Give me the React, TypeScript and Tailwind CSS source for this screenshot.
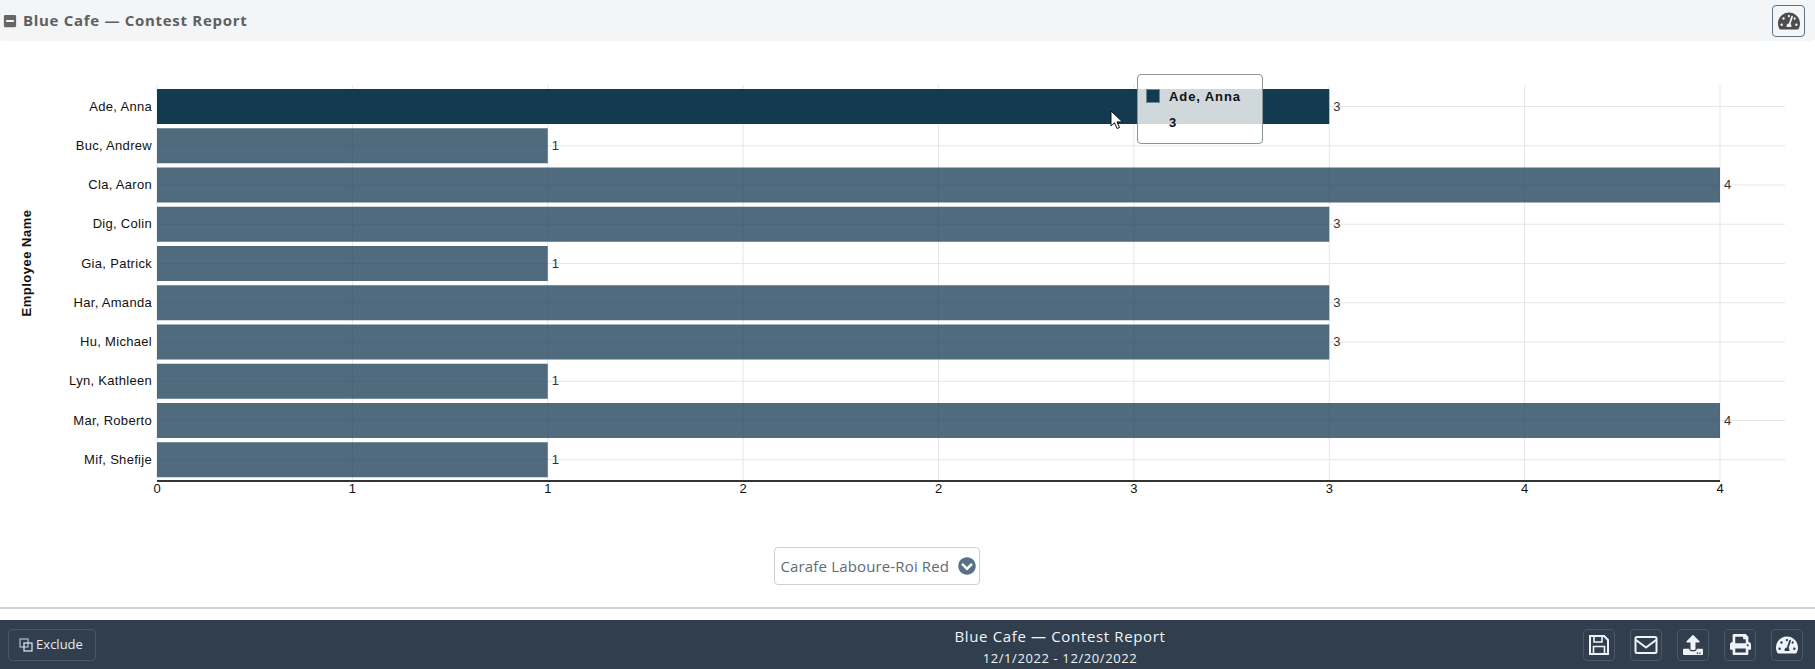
import React from 'react';
import {
  FaMinusSquare,
  FaTachometerAlt,
  FaUpload,
  FaPrint,
  FaChevronCircleDown,
} from 'react-icons/fa';

const rows = [
  { name: 'Ade, Anna', value: 3 },
  { name: 'Buc, Andrew', value: 1 },
  { name: 'Cla, Aaron', value: 4 },
  { name: 'Dig, Colin', value: 3 },
  { name: 'Gia, Patrick', value: 1 },
  { name: 'Har, Amanda', value: 3 },
  { name: 'Hu, Michael', value: 3 },
  { name: 'Lyn, Kathleen', value: 1 },
  { name: 'Mar, Roberto', value: 4 },
  { name: 'Mif, Shefije', value: 1 },
];

const ticks = ['0', '1', '1', '2', '2', '3', '3', '4', '4'];

const X0 = 157;
const UNIT = 390.75;
const TOP = 48;
const PITCH = 39.25;

const Chart: React.FC = () => (
  <svg width={1815} height={515} className="block" style={{ fontFamily: '"Liberation Sans", Arial, sans-serif' }}>
    {/* Grid */}
    {ticks.map((_, i) => (
      <line key={i} x1={X0 + (i * UNIT) / 2} x2={X0 + (i * UNIT) / 2} y1={44} y2={439} stroke="#e6e6e6" />
    ))}
    {rows.map((r, i) => (
      <line key={r.name} x1={X0} x2={1785} y1={65.5 + i * PITCH} y2={65.5 + i * PITCH} stroke="#e6e6e6" />
    ))}

    {/* Bars */}
    {rows.map((r, i) => {
      const y = TOP + i * PITCH;
      return (
        <g key={r.name}>
          <rect x={X0} y={y} width={r.value * UNIT} height={35} fill="#143a52" fillOpacity={i === 0 ? 1 : 0.75} />
          <text x={152} y={y + 21.5} textAnchor="end" fontSize={13} letterSpacing={0.3} fill="#111">
            {r.name}
          </text>
          <text x={X0 + r.value * UNIT + 4} y={y + 21.5} fontSize={13} fill="#333">
            {r.value}
          </text>
        </g>
      );
    })}

    {/* Axis */}
    <rect x={X0} y={439} width={1563} height={2} fill="#333" />
    {ticks.map((t, i) => (
      <text key={i} x={X0 + (i * UNIT) / 2} y={452} textAnchor="middle" fontSize={13} fill="#111">
        {t}
      </text>
    ))}
    <text
      transform="translate(31 222) rotate(-90)"
      textAnchor="middle"
      fontSize={13}
      fontWeight={700}
      letterSpacing={0.5}
      fill="#111"
    >
      Employee Name
    </text>
  </svg>
);

const ToolButton: React.FC<{ children: React.ReactNode }> = ({ children }) => (
  <button className="flex h-8 w-8 items-center justify-center rounded border border-[#4a5866] text-[#eef3f8]">
    {children}
  </button>
);

export default function App() {
  return (
    <div className="relative flex h-[669px] w-[1815px] flex-col overflow-hidden bg-white font-['Open_Sans',sans-serif]">
      {/* Header */}
      <div className="flex h-[41px] items-center justify-between rounded-b bg-[#f3f5f7] pl-[3px] pr-[10px]">
        <div className="flex items-center gap-[6px] text-[15px] font-bold tracking-[0.7px] text-[#5f5f5f]">
          <FaMinusSquare className="h-[14px] w-[14px] text-[#666]" />
          <span>Blue Cafe — Contest Report</span>
        </div>
        <button className="flex h-[32px] w-[33px] items-center justify-center rounded border border-[#5f7486] text-[#4d4d4d]">
          <FaTachometerAlt className="h-[22px] w-[22px]" />
        </button>
      </div>

      <Chart />

      {/* Wine picker */}
      <div className="flex justify-center pr-[62px]">
        <div className="-mt-[9px] flex h-[38px] w-[206px] items-center justify-between rounded border border-[#cfcfcf] pl-[6px] pr-[3px] text-[15px] tracking-[0.15px] text-[#5f6b76]">
          <span>Carafe Laboure-Roi Red</span>
          <FaChevronCircleDown className="h-[18px] w-[18px] text-[#5a7087]" />
        </div>
      </div>

      <div className="mt-[22px] h-[2px] bg-[#d2d2d2]" />

      {/* Footer */}
      <div className="mt-auto flex h-[49px] items-center justify-between bg-[#303e4d] pl-2 pr-3 text-white">
        <button className="flex h-8 w-[88px] items-center justify-center gap-[3px] rounded border border-[#4a5866] pr-[2px] text-[13px] text-[#e4ebf2]">
          <svg width="14" height="14" viewBox="0 0 14 14" fill="none" stroke="currentColor" strokeWidth="1.2">
            <rect x="1" y="1" width="8" height="8" stroke="#a9c3dc" />
            <rect x="5" y="5" width="8" height="8" />
          </svg>
          Exclude
        </button>
        <div className="absolute left-[1060px] top-[625px] -translate-x-[50%] text-center">
          <div className="text-[15px] leading-[22px] tracking-[0.65px] text-[#f2f5f8]">Blue Cafe — Contest Report</div>
          <div className="mt-[1px] text-[13px] leading-[20px] tracking-[0.6px] text-[#eef2f6]">12/1/2022 - 12/20/2022</div>
        </div>
        <div className="flex gap-[15px]">
          <ToolButton>
            {/* floppy disk */}
            <svg width="22" height="22" viewBox="0 0 22 22" fill="none" stroke="currentColor" strokeWidth="2">
              <path d="M2 2h14l4 4v14H2z" />
              <path d="M6 2v6h8V2" strokeWidth="1.6" />
              <path d="M5.5 20v-7.5h11V20" strokeWidth="1.6" />
            </svg>
          </ToolButton>
          <ToolButton>
            {/* envelope */}
            <svg width="24" height="20" viewBox="0 0 24 20" fill="none" stroke="currentColor" strokeWidth="2">
              <rect x="1.5" y="2" width="21" height="16" rx="1.5" />
              <path d="M2 5l10 7.5L22 5" />
            </svg>
          </ToolButton>
          <ToolButton>
            <FaUpload className="h-[20px] w-[20px]" />
          </ToolButton>
          <ToolButton>
            <FaPrint className="h-[21px] w-[21px]" />
          </ToolButton>
          <ToolButton>
            <FaTachometerAlt className="h-[22px] w-[22px]" />
          </ToolButton>
        </div>
      </div>

      {/* Chart tooltip */}
      <div className="absolute left-[1137px] top-[74px] h-[70px] w-[126px] rounded border border-[#8a959c] bg-white/80 font-['Liberation_Sans',sans-serif] text-[13px] font-bold tracking-[0.9px] text-[#111]">
        <div className="absolute left-[8px] top-[14px] h-[14px] w-[14px] border border-[#6f8594] bg-[#143a52]" />
        <div className="absolute left-[31px] top-[12px]">Ade, Anna</div>
        <div className="absolute left-[31px] top-[38px]">3</div>
      </div>

      {/* Mouse pointer */}
      <svg className="absolute left-[1110px] top-[110px]" width="14" height="20" viewBox="0 0 14 20">
        <path d="M1 1v15l3.5-3.2 2.5 5.7 2.5-1-2.5-5.6H12.5z" fill="#fff" stroke="#111" strokeWidth="1" />
      </svg>
    </div>
  );
}
